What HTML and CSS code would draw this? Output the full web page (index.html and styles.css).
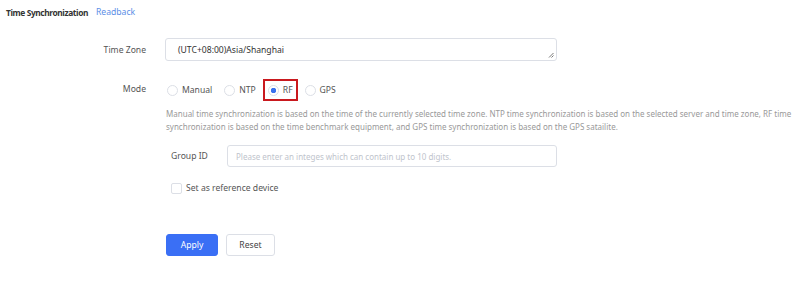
FILE: index.html
```html
<!DOCTYPE html>
<html lang="en">
<head>
    <meta charset="UTF-8">
    <meta name="viewport" content="width=device-width, initial-scale=1.0">
    <title>Time Synchronization</title>
    <link rel="stylesheet" href="styles.css">
</head>
<body>

    <div class="header">
        <span class="title">Time Synchronization</span>
        <a class="readback">Readback</a>
    </div>

    <div class="form">
        <div class="row row-zone">
            <label class="label">Time Zone</label>
            <div class="zone-box">
                <span>(UTC+08:00)Asia/Shanghai</span>
                <svg class="grip" width="6" height="6" viewBox="0 0 6 6">
                    <path d="M5.5 1 L1 5.5 M5.5 3.5 L3.5 5.5" stroke="#777" stroke-width="1"/>
                </svg>
            </div>
        </div>

        <div class="row row-mode">
            <label class="label">Mode</label>
            <div class="radios">
                <span class="radio"><i class="dot"></i>Manual</span>
                <span class="radio"><i class="dot"></i>NTP</span>
                <span class="radio radio-on mark"><i class="dot"></i>RF</span>
                <span class="radio"><i class="dot"></i>GPS</span>
            </div>
        </div>

        <div class="sub">
            <p class="desc">Manual time synchronization is based on the time of the currently selected time zone. NTP time synchronization is based on the selected server and time zone, RF time synchronization is based on the time benchmark equipment, and GPS time synchronization is based on the GPS satailite.</p>

            <div class="group-row">
                <label class="group-label">Group ID</label>
                <input class="group-input" placeholder="Please enter an integes which can contain up to 10 digits.">
            </div>

            <div class="check-row">
                <i class="box"></i>
                <span>Set as reference device</span>
            </div>
        </div>

        <div class="buttons">
            <button class="btn btn-apply">Apply</button>
            <button class="btn btn-reset">Reset</button>
        </div>
    </div>

</body>
</html>
```

FILE: styles.css
```css
html, body {
    margin: 0;
    padding: 0;
    background-color: white;
    font-family: "Noto Sans", "Open Sans", sans-serif;
    font-size: 8.6px;
    color: #444;
}

.header{
    display: flex;
    align-items: center;
    gap: 8px;
    padding: 5px 6px 0 6px;
    height: 14px;
}

.title{
    font-weight: bold;
    color: #333;
    font-size: 8.4px;
    letter-spacing: -0.4px;
}

.readback{
    color: #5b8ee6;
}

.form{
    padding-top: 19px;
}

.row{
    display: flex;
    align-items: center;
}

.label{
    width: 146px;
    text-align: right;
    margin-right: 19px;
    color: #555;
}

.zone-box{
    position: relative;
    width: 378px;
    height: 21px;
    border: 1px solid #dcdfe6;
    border-radius: 3px;
    padding-left: 12px;
    display: flex;
    align-items: center;
    color: #333;
}

.grip{
    position: absolute;
    right: 2px;
    bottom: 2px;
}

.row-mode{
    margin-top: 19px;
    height: 20px;
}

.row-mode .label{
    margin-top: -2px;
}

.radios{
    display: flex;
    align-items: center;
    gap: 12px;
    margin-left: 2px;
}

.radio{
    display: flex;
    align-items: center;
    gap: 4px;
    color: #555;
}

.dot{
    width: 11px;
    height: 11px;
    border: 1px solid #dcdfe6;
    border-radius: 50%;
    box-sizing: border-box;
}

.radio-on .dot{
    background: radial-gradient(circle, #3a72ee 0 2.5px, white 3px);
}

.mark{
    outline: 2px solid #c9191e;
    outline-offset: 3px;
}

.sub{
    margin-left: 166px;
    width: 630px;
}

.desc{
    margin: 7px 0 0 0;
    color: #999;
    font-size: 8px;
    line-height: 13px;
    letter-spacing: 0;
}

.group-row{
    display: flex;
    align-items: center;
    margin-top: 12px;
}

.group-label{
    width: 56px;
    padding-left: 5px;
    box-sizing: border-box;
    color: #555;
}

.group-input{
    width: 330px;
    height: 22px;
    box-sizing: border-box;
    border: 1px solid #dcdfe6;
    border-radius: 3px;
    padding-left: 8px;
    font-family: inherit;
    font-size: 8px;
    margin-left: 5px;
}

.group-input::placeholder{
    color: #c0c4cc;
}

.check-row{
    display: flex;
    align-items: center;
    gap: 4px;
    margin-top: 15px;
    margin-left: 5px;
    color: #555;
}

.box{
    width: 11px;
    height: 11px;
    border: 1px solid #dcdfe6;
    border-radius: 2px;
    box-sizing: border-box;
}

.buttons{
    display: flex;
    gap: 8px;
    margin-left: 166px;
    margin-top: 40px;
}

.btn{
    height: 22px;
    border-radius: 3px;
    font-family: inherit;
    font-size: 8.6px;
    padding: 0;
}

.btn-apply{
    width: 52px;
    background-color: #3a6ff5;
    border: 1px solid #3a6ff5;
    color: white;
}

.btn-reset{
    width: 49px;
    background-color: white;
    border: 1px solid #dcdfe6;
    color: #444;
}
```
